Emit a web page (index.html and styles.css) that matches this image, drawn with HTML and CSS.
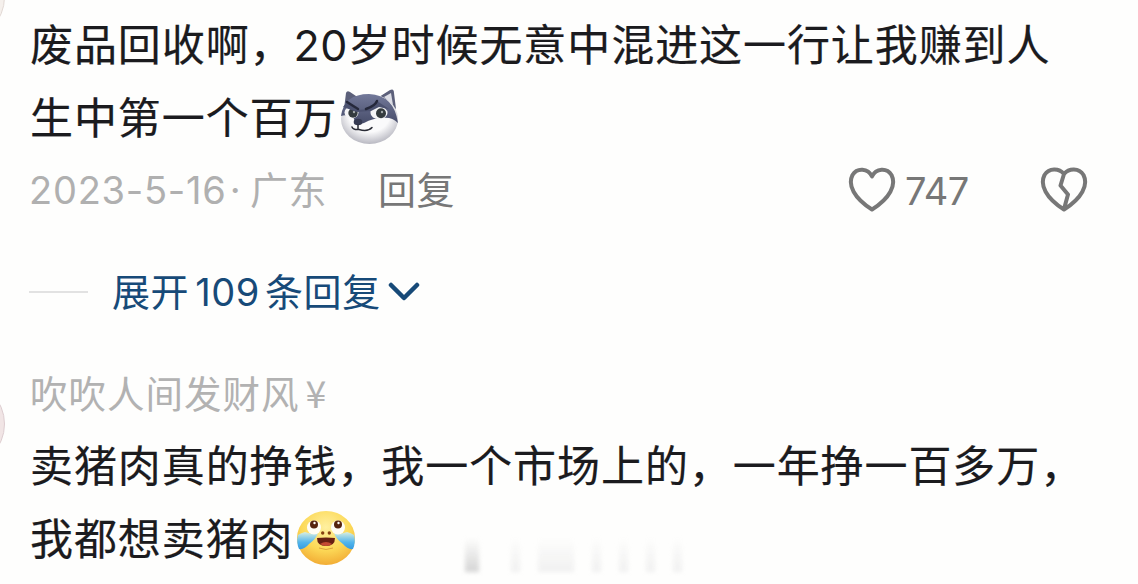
FILE: index.html
```
<!DOCTYPE html>
<html lang="zh-CN">
<head>
    <meta charset="UTF-8">
    <meta name="viewport" content="width=device-width, initial-scale=1.0">
    <title>评论</title>
    <link rel="stylesheet" href="styles.css">
</head>
<body>
    <main class="comments">
        <article class="comment first">
            <span class="avatar avatar-top"></span>
            <p class="text">废品回收啊，<span class="num">20</span>岁时候无意中混进这一行让我赚到人<br>生中第一个百万<svg class="emoji husky" viewBox="0 0 60 58">
                <defs>
                    <linearGradient id="fur" x1="0" y1="0" x2="0" y2="1">
                        <stop offset="0" stop-color="#73799a"/>
                        <stop offset="1" stop-color="#454b68"/>
                    </linearGradient>
                    <radialGradient id="face" cx=".5" cy=".4" r=".6">
                        <stop offset=".6" stop-color="#fafafb"/>
                        <stop offset="1" stop-color="#b9b9c2"/>
                    </radialGradient>
                </defs>
                <path d="M5 20 L7 4 Q8 1 11 3 L20 9 M40 8 L51 1 Q55 -1 55 4 L57 20Z" fill="#5c607a"/>
                <path d="M45 8 L52 4 L54 16Z" fill="#dcdde5"/>
                <ellipse cx="30.500" cy="30" rx="28.500" ry="25" fill="url(#face)"/>
                <path d="M2 27 Q5 5 30 5 Q55 6 59 34 Q53 28 44 29 Q34 29 25 34 L18 36 L14 28 Q7 25 2 27Z" fill="url(#fur)"/>
                <ellipse cx="12.500" cy="23.500" rx="7" ry="6" fill="#f4f4f6"/>
                <ellipse cx="40" cy="24" rx="8.500" ry="6.200" fill="#f4f4f6"/>
                <circle cx="14" cy="24" r="4.700" fill="#343b3e"/>
                <circle cx="42" cy="24.300" r="5" fill="#343b3e"/>
                <circle cx="15" cy="23" r="1.200" fill="#a4aaab"/>
                <circle cx="43" cy="23" r="1.200" fill="#a4aaab"/>
                <path d="M4 18 L8 13 L19 21 L30 20 L38 12 L50 20 L40 18 L32 22 L18 23Z" fill="#4c5270"/>
                <path d="M8 13 L19 20 M38 12 Q36 17 27 20" fill="none" stroke="#25283b" stroke-width="2.500" stroke-linecap="round"/>
                <ellipse cx="19" cy="33" rx="4.300" ry="3.300" fill="#353a52"/>
                <path d="M19 36 V40 M13 38 Q14 41 20 40.500 Q29 43 33 38.500" fill="none" stroke="#292b35" stroke-width="1.500" stroke-linecap="round"/>
            </svg></p>
            <div class="meta">
                <span class="date"><span class="num">2023-5-16</span><span class="dot">·</span>广东</span>
                <span class="reply">回复</span>
                <span class="like">
                    <svg class="heart" viewBox="0 0 48 46">
                        <path d="M24 9.500 C20 1 9 .5 4.500 8 C-.5 18 6 31 24 42.500 C42 31 48.500 18 43.500 8 C39 .5 28 1 24 9.500Z"/>
                    </svg>
                    <span class="num">747</span>
                </span>
                <svg class="heart broken" viewBox="0 0 48 46">
                    <path d="M24 7 C19 1 9 .8 4.500 8 C-.5 18 6 31 24 42.500 C42 31 48.500 18 43.500 8 C39 .8 29 1 24 7 L20.500 18.500 L28 27.500 L24 42"/>
                </svg>
            </div>
            <div class="expand">
                <span class="rule"></span>
                <span class="label">展开</span><span class="num count">109</span><span class="label">条回复</span>
                <svg class="chevron" viewBox="0 0 32 20"><path d="M3 3 L16 16 L29 3"/></svg>
            </div>
        </article>
        <article class="comment">
            <span class="avatar avatar-bottom"></span>
            <div class="name">吹吹人间发财风<span class="yen">¥</span></div>
            <p class="text">卖猪肉真的挣钱，我一个市场上的，一年挣一百多万，<br>我都想卖猪肉<svg class="emoji cry" viewBox="0 0 60 58">
                <defs>
                    <radialGradient id="skin" cx=".5" cy=".3" r=".7">
                        <stop offset="0" stop-color="#fff0a0"/>
                        <stop offset=".6" stop-color="#fcd957"/>
                        <stop offset="1" stop-color="#f2ad35"/>
                    </radialGradient>
                    <linearGradient id="tear" x1="0" y1="0" x2="0" y2="1">
                        <stop offset="0" stop-color="#d9eee0"/>
                        <stop offset=".6" stop-color="#52b5ec"/>
                        <stop offset="1" stop-color="#359be0"/>
                    </linearGradient>
                </defs>
                <ellipse cx="30" cy="28" rx="29" ry="27" fill="url(#skin)"/>
                <path d="M9 22 Q16 25 22 23 Q20 29 13 34 Q8 40 3 39 Q0 32 2 25 Q5 23 9 22Z" fill="url(#tear)"/>
                <path d="M51 22 Q44 25 38 23 Q40 29 47 34 Q52 40 57 39 Q60 32 58 25 Q55 23 51 22Z" fill="url(#tear)"/>
                <circle cx="18" cy="17.500" r="7" fill="#fffdf5"/>
                <circle cx="42" cy="17.500" r="7" fill="#fffdf5"/>
                <circle cx="18" cy="14.500" r="4" fill="#56240f"/>
                <circle cx="42" cy="14.500" r="4" fill="#56240f"/>
                <circle cx="18.500" cy="13" r="1.200" fill="#fff"/>
                <circle cx="42.500" cy="13" r="1.200" fill="#fff"/>
                <circle cx="26.700" cy="23" r="1.700" fill="#85400f"/>
                <circle cx="33.300" cy="23" r="1.700" fill="#85400f"/>
                <path d="M21 28 Q30 27 39 28 Q39 36 30 36 Q21 36 21 28Z" fill="#672012"/>
                <path d="M24 34 Q30 30 36 34 Q33 36 30 36 Q27 36 24 34Z" fill="#c44a32"/>
                <path d="M23 38 Q30 41 37 38" fill="none" stroke="#dca13a" stroke-width="1"/>
            </svg></p>
        </article>
        <div class="smudge"><i></i><i></i><i></i><i></i><i></i><i></i><i></i></div>
    </main>
</body>
</html>
```
FILE: styles.css
```
body {
    margin: 0;
    background-color: #fefefd;
    font-family: Inter, "Noto Sans CJK SC", sans-serif;
    color: #1b1b1e;
}

.comments {
    position: relative;
    height: 584px;
    overflow: hidden;
}

.comment {
    position: relative;
    padding-left: 29px;
}

.first {
    padding-top: 6px;
}

.text {
    margin: 0;
    padding-left: 1px;
    font-family: "Noto Sans CJK SC", sans-serif;
    font-size: 43px;
    line-height: 73px;
    letter-spacing: 0.92px;
    white-space: nowrap;
    -webkit-text-stroke: 0.2px #1b1b1e;
}

.num {
    font-family: Inter, sans-serif;
    line-height: 1;
}

.text .num {
    letter-spacing: 0.4px;
    -webkit-text-stroke: 0;
}

.emoji {
    width: 60px;
    height: 58px;
    margin: -10px 0 -10px 2px;
    vertical-align: -3px;
}

.meta {
    display: flex;
    align-items: center;
    height: 76px;
    font-size: 38px;
    letter-spacing: 0.5px;
    color: #b0b0b0;
    white-space: nowrap;
}

.date {
    width: 349px;
    padding-bottom: 6px;
}

.date .num {
    letter-spacing: 0.75px;
}

.dot {
    margin: 0 9px 0 3px;
}

.reply {
    padding-bottom: 6px;
    color: #777;
}

.like {
    display: flex;
    align-items: center;
    gap: 9px;
    margin-left: 393px;
    color: #777;
}

.like .num {
    padding-top: 2px;
    letter-spacing: -0.6px;
}

.heart {
    width: 48px;
    height: 46px;
    fill: none;
    stroke: #777;
    stroke-width: 4;
    stroke-linejoin: round;
}

.broken {
    margin-left: auto;
    margin-right: 50px;
}

.expand {
    display: flex;
    align-items: center;
    height: 60px;
    margin-top: 34px;
    font-size: 38px;
    letter-spacing: 0.6px;
    color: #174a78;
}

.label {
    padding-bottom: 6px;
}

.rule {
    width: 59px;
    height: 2px;
    margin-right: 24px;
    background-color: #e2e2e2;
}

.count {
    margin: 0 5px 0 6px;
}

.chevron {
    width: 32px;
    height: 20px;
    margin-left: 7px;
    fill: none;
    stroke: #174a78;
    stroke-width: 4.5;
    stroke-linecap: round;
    stroke-linejoin: round;
}

.name {
    height: 67px;
    margin-top: 38px;
    padding-left: 1px;
    font-size: 37.5px;
    line-height: 70px;
    letter-spacing: 1px;
    color: #b2b2b2;
}

.yen {
    margin-left: 6px;
    font-family: "Noto Sans CJK SC", sans-serif;
    line-height: 1;
}

/* avatars are cut off by the left edge */
.avatar {
    position: absolute;
    left: -83px;
    width: 86px;
    height: 86px;
    border: 1px solid #e2d9d5;
    border-radius: 50%;
    background-color: #f5f0ec;
}

.avatar-top {
    top: -47px;
}

.avatar-bottom {
    top: 20px;
    border-color: #ddcdd0;
    background-color: #f1e5e5;
}

/* faded watermark at the bottom */
.smudge {
    position: absolute;
    left: 465px;
    top: 538px;
    display: flex;
    gap: 18px;
    filter: blur(2px);
}

.smudge i {
    width: 9px;
    height: 34px;
    background: linear-gradient(transparent, #f0f0f0);
}

.smudge i:first-child {
    width: 14px;
    margin-right: 14px;
    background: linear-gradient(transparent, #d4d4d4);
}

.smudge i:nth-child(3) {
    width: 36px;
}
```
